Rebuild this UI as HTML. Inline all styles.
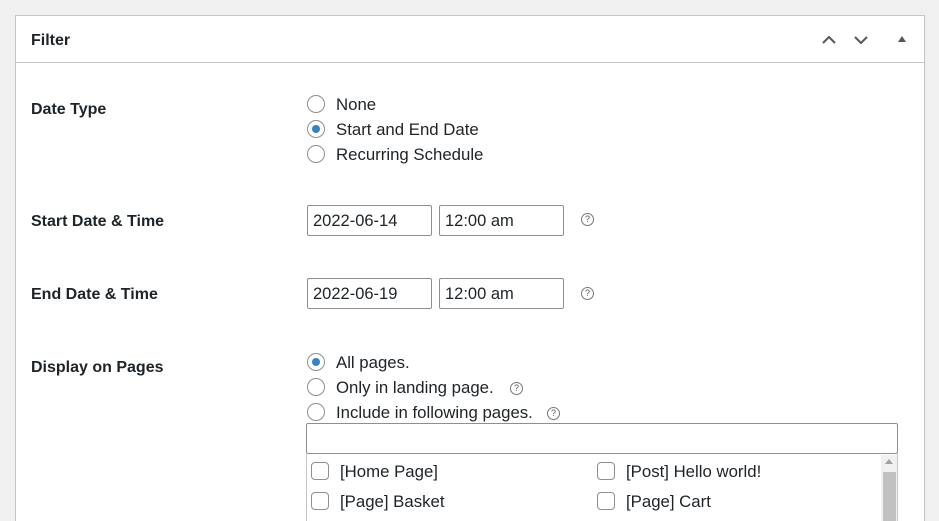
<!DOCTYPE html>
<html><head><style>
*{box-sizing:border-box}
html,body{margin:0;width:939px;height:521px;overflow:hidden}
body{background:#f0f0f1;font-family:"Liberation Sans",sans-serif;color:#1d2327;position:relative;font-size:16.8px}
.panel{position:absolute;left:15px;top:15px;width:910px;height:506px;background:#fff;border:1px solid #c3c4c7;border-bottom:none}
.hdr{position:absolute;left:0;top:0;width:100%;height:47px;border-bottom:1px solid #c3c4c7}
.a{position:absolute;white-space:nowrap}
.lbl{font-weight:bold;font-size:16px}
.radio{position:absolute;width:18px;height:18px;border:1px solid #8c8f94;border-radius:50%;background:#fff}
.radio.on::after{content:"";position:absolute;left:4px;top:4px;width:8px;height:8px;border-radius:50%;background:#3582c4}
.inp{position:absolute;height:31px;border:1px solid #8c8f94;border-radius:2px;padding:6px 5px;font-size:16.5px;background:#fff}
.q{position:absolute;width:13px;height:13px;border:1px solid #777;border-radius:50%;font-size:9px;line-height:11px;text-align:center;color:#555}
.cb{position:absolute;width:18px;height:18px;border:1px solid #8c8f94;border-radius:4px;background:#fff}
</style></head><body>
<div class="panel">
<div class="hdr">
<div class="a lbl" style="left:15px;top:16px">Filter</div>
<svg class="a" style="left:805px;top:16px" width="90" height="16"><path d="M2 11 L8 5 L14 11" stroke="#50575e" stroke-width="2" fill="none"/><path d="M34 5 L40 11 L46 5" stroke="#50575e" stroke-width="2" fill="none"/><path d="M77 10 L81 4 L85 10Z" fill="#50575e"/></svg>
</div>
</div>
<div class="a lbl" style="left:31px;top:101px">Date Type</div>
<div class="radio" style="left:307px;top:95px"></div><div class="a" style="left:336px;top:95px">None</div>
<div class="radio on" style="left:307px;top:120px"></div><div class="a" style="left:336px;top:120px">Start and End Date</div>
<div class="radio" style="left:307px;top:145px"></div><div class="a" style="left:336px;top:145px">Recurring Schedule</div>

<div class="a lbl" style="left:31px;top:213px">Start Date &amp; Time</div>
<div class="inp" style="left:307px;top:205px;width:125px">2022-06-14</div>
<div class="inp" style="left:439px;top:205px;width:125px">12:00 am</div>
<div class="q" style="left:581px;top:213px">?</div>

<div class="a lbl" style="left:31px;top:286px">End Date &amp; Time</div>
<div class="inp" style="left:307px;top:278px;width:125px">2022-06-19</div>
<div class="inp" style="left:439px;top:278px;width:125px">12:00 am</div>
<div class="q" style="left:581px;top:287px">?</div>

<div class="a lbl" style="left:31px;top:359px">Display on Pages</div>
<div class="radio on" style="left:307px;top:353px"></div><div class="a" style="left:336px;top:353px">All pages.</div>
<div class="radio" style="left:307px;top:378px"></div><div class="a" style="left:336px;top:378px">Only in landing page.</div><div class="q" style="left:510px;top:382px">?</div>
<div class="radio" style="left:307px;top:403px"></div><div class="a" style="left:336px;top:403px">Include in following pages.</div><div class="q" style="left:547px;top:407px">?</div>
<div class="inp" style="left:306px;top:423px;width:592px;height:31px"></div>
<div class="a" style="left:306px;top:454px;width:592px;height:80px;border:1px solid #c3c4c7;border-top:none;background:#fff"></div>
<div class="a" style="left:881px;top:455px;width:16px;height:70px;background:#f0f0f0"></div>
<div class="a" style="left:883px;top:472px;width:13px;height:60px;background:#c1c1c1"></div>
<div class="a" style="left:885px;top:459px;width:0;height:0;border-left:4px solid transparent;border-right:4px solid transparent;border-bottom:5px solid #a0a0a0"></div>
<div class="cb" style="left:311px;top:462px"></div><div class="a" style="left:340px;top:462px">[Home Page]</div>
<div class="cb" style="left:597px;top:462px"></div><div class="a" style="left:626px;top:462px">[Post] Hello world!</div>
<div class="cb" style="left:311px;top:492px"></div><div class="a" style="left:340px;top:492px">[Page] Basket</div>
<div class="cb" style="left:597px;top:492px"></div><div class="a" style="left:626px;top:492px">[Page] Cart</div>
</body></html>
